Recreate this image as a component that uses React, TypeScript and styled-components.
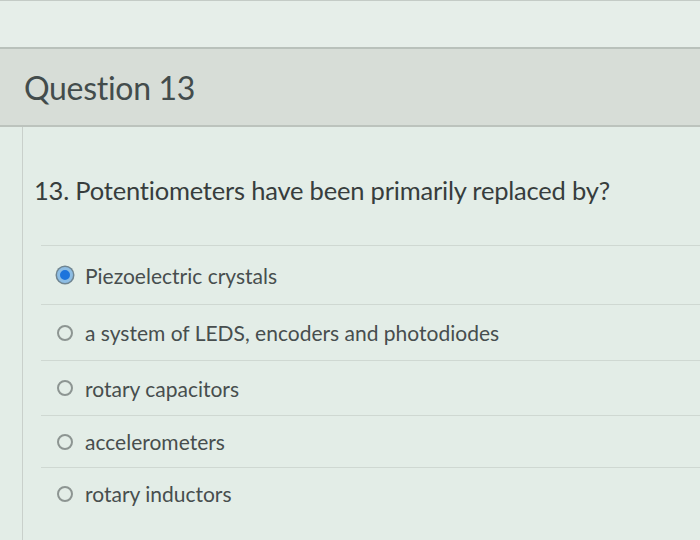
import styled, { createGlobalStyle } from "styled-components";

const GlobalStyle = createGlobalStyle`
  html, body {
    margin: 0;
    padding: 0;
    background: #e3ede7;
    font-family: Lato, "Open Sans", sans-serif;
  }
`;

const Page = styled.div`
  width: 700px;
  height: 540px;
  overflow: hidden;
  display: flex;
  flex-direction: column;
  background: #e3ede7;
`;

const TopStrip = styled.div`
  height: 46px;
  border-top: 1px solid #c4cbc6;
  border-bottom: 2px solid #b9c1bb;
  background: #e6eee9;
`;

const Header = styled.div`
  height: 76px;
  display: flex;
  align-items: center;
  padding-left: 24px;
  background: #d7ddd7;
  border-bottom: 2px solid #bcc3bd;
`;

const Title = styled.h2`
  margin: 0;
  font-size: 32px;
  font-weight: 400;
  color: #434c4c;
  letter-spacing: -0.3px;
`;

const Body = styled.div`
  flex: 1;
  margin-left: 22px;
  border-left: 1px solid #c9d0cb;
  display: flex;
  flex-direction: column;
`;

const Question = styled.p`
  margin: 0;
  padding: 48px 0 0 11px;
  height: 70px;
  font-size: 25.5px;
  line-height: 30px;
  color: #373d3d;
  letter-spacing: -0.2px;
`;

const OptionList = styled.div`
  margin-left: 18px;
  display: flex;
  flex-direction: column;
`;

const Option = styled.label<{ $h: number }>`
  box-sizing: border-box;
  height: ${(p) => p.$h}px;
  display: flex;
  align-items: center;
  gap: 12px;
  padding-left: 16px;
  border-top: 1px solid #cfd8d2;
  font-size: 21px;
  color: #474e4e;
`;

const Radio = styled.span<{ $checked?: boolean }>`
  width: 16px;
  height: 16px;
  border-radius: 50%;
  box-sizing: border-box;
  flex: none;
  border: ${(p) => (p.$checked ? "3px solid #8dbde4" : "2px solid #8d9592")};
  background: ${(p) => (p.$checked ? "#1d74dc" : "transparent")};
  box-shadow: ${(p) => (p.$checked ? "0 0 0 1.5px #6f8591" : "none")};
`;

const options = [
  { text: "Piezoelectric crystals", checked: true, h: 59 },
  { text: "a system of LEDS, encoders and photodiodes", h: 56 },
  { text: "rotary capacitors", h: 55 },
  { text: "accelerometers", h: 52 },
  { text: "rotary inductors", h: 52 },
];

export default function App() {
  return (
    <Page>
      <GlobalStyle />
      <TopStrip />
      <Header>
        <Title>Question 13</Title>
      </Header>
      <Body>
        <Question>13. Potentiometers have been primarily replaced by?</Question>
        <OptionList>
          {options.map((o) => (
            <Option key={o.text} $h={o.h}>
              <Radio $checked={o.checked} />
              {o.text}
            </Option>
          ))}
        </OptionList>
      </Body>
    </Page>
  );
}
